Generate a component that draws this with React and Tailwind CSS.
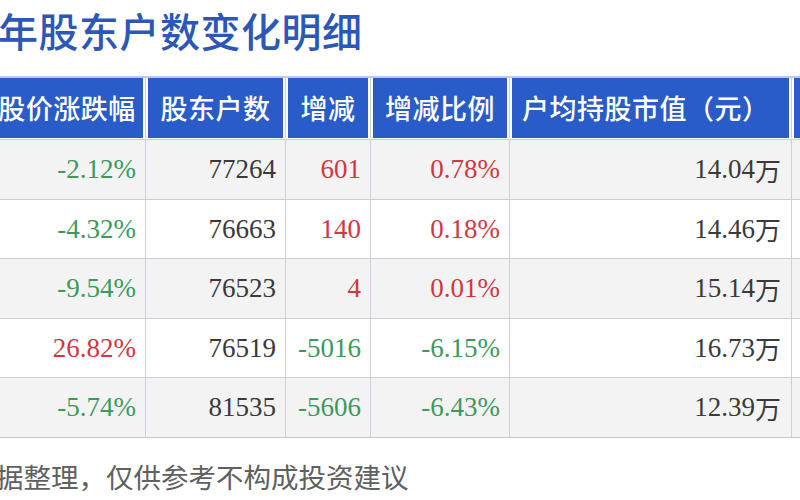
const cols = "grid-cols-[157px_140px_85px_139px_282px_1fr]";

const rows = [
  { chg: "-2.12%", chgUp: false, num: "77264", diff: "601", diffUp: true, ratio: "0.78%", value: "14.04万" },
  { chg: "-4.32%", chgUp: false, num: "76663", diff: "140", diffUp: true, ratio: "0.18%", value: "14.46万" },
  { chg: "-9.54%", chgUp: false, num: "76523", diff: "4", diffUp: true, ratio: "0.01%", value: "15.14万" },
  { chg: "26.82%", chgUp: true, num: "76519", diff: "-5016", diffUp: false, ratio: "-6.15%", value: "16.73万" },
  { chg: "-5.74%", chgUp: false, num: "81535", diff: "-5606", diffUp: false, ratio: "-6.43%", value: "12.39万" },
];

const headers = [
  { label: "股价涨跌幅", align: "justify-center" },
  { label: "股东户数", align: "justify-center" },
  { label: "增减", align: "justify-center" },
  { label: "增减比例", align: "justify-center" },
  { label: "户均持股市值（元）", align: "justify-start pl-[10px]" },
  { label: "", align: "" },
];

const color = (up) => (up ? "text-[#d2363f]" : "text-[#3b9a5c]");

const Cell = ({ children, className = "" }) => (
  <div
    className={`flex h-full items-center justify-end border-r border-[#c9d0db] pr-[9px] ${className}`}
  >
    {children}
  </div>
);

export default function App() {
  return (
    <div className="h-[500px] w-[800px] overflow-hidden bg-white font-['Noto_Sans_CJK_SC',sans-serif]">
      {/* 标题 */}
      <div className="-ml-[2px] flex h-[58px] items-center pt-[2px] text-[40px] font-medium leading-none tracking-[0.5px] text-[#2c57b8]">
        年股东户数变化明细
      </div>

      {/* 表格 */}
      <div className="-ml-[11px] mt-[18px] w-[822px]">
        <div className={`grid h-[63px] ${cols} border-t-[2px] border-[#b7cbee] pb-[1px]`}>
          {headers.map((h, i) => (
            <div key={i} className="h-full border-r border-[#c9d0db] px-[2px]">
              <div
                className={`flex h-full items-center bg-[#2a5cc9] text-[27px] font-medium tracking-[0.5px] text-white ${h.align}`}
              >
                {h.label}
              </div>
            </div>
          ))}
        </div>

        <div className="border-b border-[#c3c9d3] font-['Liberation_Serif',serif] text-[27px]">
          {rows.map((r, i) => (
            <div
              key={i}
              className={`grid h-[59.5px] ${cols} border-t border-[#c9ced8] ${
                i % 2 === 0 ? "bg-[#f3f3f3]" : "bg-white"
              }`}
            >
              <Cell className={color(r.chgUp)}>{r.chg}</Cell>
              <Cell className="text-[#3a3a3a]">{r.num}</Cell>
              <Cell className={color(r.diffUp)}>{r.diff}</Cell>
              <Cell className={color(r.diffUp)}>{r.ratio}</Cell>
              <Cell className="pr-[10px] text-[#3a3a3a]">
                {r.value.slice(0, -1)}
                <span className="font-['Noto_Sans_CJK_SC',serif] text-[26px]">万</span>
              </Cell>
              <Cell />
            </div>
          ))}
        </div>
      </div>

      {/* 说明 */}
      <div className="-ml-[4px] mt-[25px] text-[27.5px] leading-none text-[#606060]">
        据整理，仅供参考不构成投资建议
      </div>
    </div>
  );
}
